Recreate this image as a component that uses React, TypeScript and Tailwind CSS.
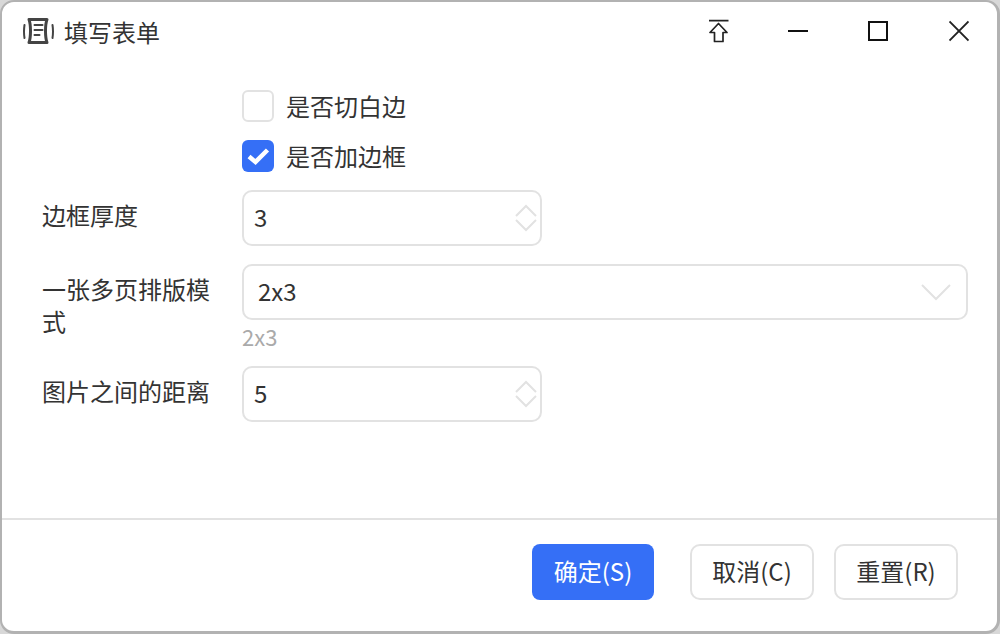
const labelCls = "mr-[24px] w-[176px] shrink-0 pt-[9px] text-[24px] leading-[32px] text-[#333]";

function TitleIcon() {
  return (
    <svg width="32" height="32" viewBox="0 0 32 32" fill="none" stroke="#444" strokeWidth="3" strokeLinecap="round" strokeLinejoin="round">
      <path d="M7 3.500h18q-1.500 4-1.500 11.500t1.500 11.500h-18q1.500-4 1.500-11.500t-1.500-11.500z" />
      <path d="M12.500 9h8M12.500 14h8M12.500 19h5" strokeWidth="2" />
      <path d="M2.500 9q-1 6.500 0 13M30.500 9q1 6.500 0 13" strokeWidth="2" />
    </svg>
  );
}

function NumberField({ value }: { value: string }) {
  return (
    <div className="flex h-[56px] w-[300px] items-center justify-between rounded-[10px] border-2 border-[#e2e2e2] pl-[11px] pr-[2px] text-[24px] text-[#333]">
      <span className="-mt-[2px] -ml-px">{value}</span>
      <svg width="24" height="30" viewBox="0 0 24 30" fill="none" stroke="#e2e2e2" strokeWidth="2">
        <path d="M2 13L12 3L22 13" />
        <path d="M2 17L12 27L22 17" />
      </svg>
    </div>
  );
}

function FooterButton({ children, primary }: { children: string; primary?: boolean }) {
  return (
    <button
      className={
        primary
          ? "h-[56px] w-[122px] rounded-[8px] bg-[#356ff6] pb-[2px] text-[24px] text-white"
          : "h-[56px] w-[124px] rounded-[10px] border-2 border-[#e2e2e2] bg-white pb-[2px] text-[24px] text-[#333]"
      }
    >
      {children}
    </button>
  );
}

export default function App() {
  return (
    <div className="h-[634px] w-[1000px] bg-[#d8d8d8] font-['Noto_Sans_CJK_SC','Liberation_Sans',sans-serif]">
      <div className="flex h-full flex-col overflow-hidden rounded-[14px] border-t-2 border-r-[3px] border-b-[3px] border-l-2 border-[#b2b2b2] bg-white">
        <div className="flex h-[60px] shrink-0 items-center pl-[20px] pr-[28px]">
          <TitleIcon />
          <span className="ml-[10px] -mt-px text-[24px] text-[#333]">填写表单</span>
          <div className="mb-[2px] ml-auto flex items-center gap-[60px]">
            <svg width="20" height="24" viewBox="0 0 20 24" fill="none" stroke="#222" strokeWidth="1.700">
              <path d="M0 1.700H19.500" />
              <path d="M9.500 4.500L1 13.500H5.500V22.500H14V13.500H18Z" strokeLinejoin="round" />
            </svg>
            <svg className="-ml-px" width="20" height="24" viewBox="0 0 20 24" fill="none" stroke="#111" strokeWidth="2">
              <path d="M0 12H20" />
            </svg>
            <svg width="20" height="24" viewBox="0 0 20 24" fill="none" stroke="#111" strokeWidth="2">
              <path d="M1 3H19V21H1Z" />
            </svg>
            <svg className="ml-px" width="20" height="24" viewBox="0 0 20 24" fill="none" stroke="#222" strokeWidth="1.800">
              <path d="M0.500 2.500L19.500 21.500M19.500 2.500L0.500 21.500" />
            </svg>
          </div>
        </div>

        <div className="flex flex-1 flex-col gap-[18px] pl-[40px] pt-[28px]">
          <div className="ml-[200px] flex h-[32px] items-center gap-[12px] text-[24px] text-[#333]">
            <span className="h-[32px] w-[32px] rounded-[6px] border-2 border-[#e2e2e2]" />
            <span className="-mt-px">是否切白边</span>
          </div>
          <div className="ml-[200px] flex h-[32px] items-center gap-[12px] text-[24px] text-[#333]">
            <span className="flex h-[32px] w-[32px] items-center justify-center rounded-[6px] bg-[#356ff6]">
              <svg width="24" height="24" viewBox="0 0 24 24" fill="none" stroke="white" strokeWidth="4.500">
                <path d="M3 12.500L9.500 18L21.500 6" />
              </svg>
            </span>
            <span className="-mt-px">是否加边框</span>
          </div>

          <div className="flex">
            <div className={labelCls}>边框厚度</div>
            <NumberField value="3" />
          </div>

          <div className="flex">
            <div className={labelCls}>一张多页排版模式</div>
            <div className="flex flex-col">
              <div className="flex h-[56px] w-[726px] items-center justify-between rounded-[10px] border-2 border-[#e2e2e2] pl-[14px] pr-[15px] text-[24px] text-[#333]">
                <span className="-mt-[2px]">2x3</span>
                <svg width="30" height="18" viewBox="0 0 30 18" fill="none" stroke="#e2e2e2" strokeWidth="2">
                  <path d="M1 2L15 16L29 2" />
                </svg>
              </div>
              <div className="h-[28px] text-[22px] leading-[32px] text-[#aaa]">2x3</div>
            </div>
          </div>

          <div className="flex">
            <div className={labelCls}>图片之间的距离</div>
            <NumberField value="5" />
          </div>
        </div>

        <div className="flex h-[113px] shrink-0 justify-end border-t-2 border-[#e2e2e2] pr-[39px] pt-[24px]">
          <FooterButton primary>确定(S)</FooterButton>
          <div className="ml-[36px] flex gap-[20px]">
            <FooterButton>取消(C)</FooterButton>
            <FooterButton>重置(R)</FooterButton>
          </div>
        </div>
      </div>
    </div>
  );
}
